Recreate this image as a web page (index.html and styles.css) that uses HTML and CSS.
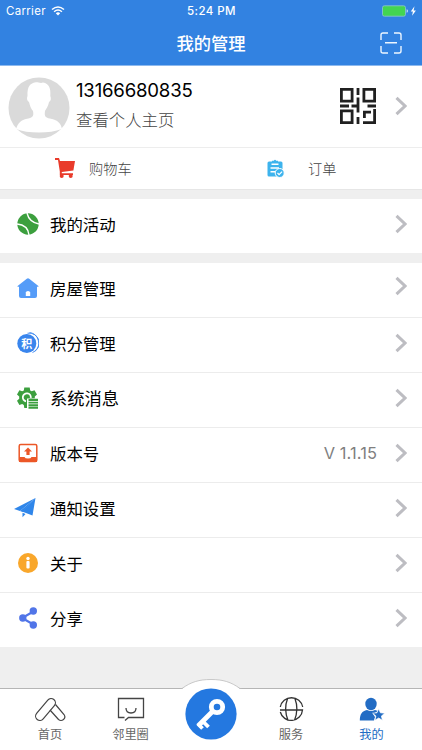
FILE: index.html
```html
<!DOCTYPE html>
<html lang="zh-CN">
<head>
<meta charset="utf-8">
<meta name="viewport" content="width=device-width, initial-scale=1">
<title>我的管理</title>
<link rel="stylesheet" href="styles.css">
</head>
<body>
<svg width="0" height="0" class="defs"><symbol id="chev" viewBox="0 0 12 20"><path d="M1.500 1.800 10 10 1.500 18.200" fill="none" stroke="#bdbdc2" stroke-width="3"/></symbol></svg>
<div class="app">
  <header class="top">
    <div class="status">
      <div class="carrier"><span>Carrier</span>
        <svg width="14" height="10" viewBox="0 0 14 10" fill="none" stroke="#fff" stroke-width="1.500"><path d="M1 3.500Q7-1.600 13 3.500M3.100 5.700Q7 2.300 10.900 5.700"/><path d="M4.800 7.200Q7 5.400 9.200 7.200L7 9.500Z" fill="#fff" stroke="none"/></svg>
      </div>
      <span class="time">5:24 PM</span>
      <svg class="battery" width="35" height="12" viewBox="0 0 35 12"><rect x=".5" y=".8" width="23" height="10.400" rx="1.800" fill="#43d551" stroke="#8fc4d8" stroke-width=".8"/><path d="M24.600 4.200q1.400.3 1.400 1.800t-1.400 1.800z" fill="#c5dcf6"/><path d="M32.500 1.200 28.800 6.500h2.100l-.8 4.200 3.800-5.300h-2.300z" fill="#fff"/></svg>
    </div>
    <div class="nav">
      <h1>我的管理</h1>
      <svg class="scan" width="22" height="22" viewBox="0 0 22 22" fill="none" stroke="#edf6ff" stroke-width="1.400"><path d="M1 8V3q0-2 2-2h5M14 1h5q2 0 2 2v5M21 14v5q0 2-2 2h-5M8 21H3q-2 0-2-2v-5M5 10.700h12"/></svg>
    </div>
  </header>

  <section class="profile">
    <svg class="avatar" width="62" height="62" viewBox="0 0 62 62"><circle cx="31" cy="31" r="30.500" fill="#dadada"/><path d="M19.500 19C19 8.500 23 7 25 6c4-2 7 1 10-.5 6 1 8 6 7.300 13.500 1 2 .7 5-1.300 6-1 5-3 7-4 9-1 6 1 7 7 8 5 1 9 4 10 10Q44 55.500 31 55.500 17 55.500 8 52c2-6 5-9 10-10 7-1 8-3 7-8-2-2-3-5-4-9-2-1-2.500-4-1.500-6z" fill="#fff"/></svg>
    <div class="who"><div class="phone">13166680835</div><div class="sub">查看个人主页</div></div>
    <svg class="qr" width="36" height="36" viewBox="0 0 36 36" fill="none" stroke="#202020" stroke-width="2.800"><path d="M1.400 1.400h10.700v11.700H1.400zM23.900 1.400h10.700v11.700H23.900zM1.400 22.900h10.700v11.700H1.400zM18 0v7M18 9.500v15M18 29v7M0 18h9M11.500 18H18M27.500 18H36M24.400 30V24.200h6.600M34.600 21v13.600H23"/></svg>
    <svg class="chev"><use href="#chev"/></svg>
  </section>
  <section class="quick">
    <div class="cart">
      <svg width="20" height="20" viewBox="0 0 20 20"><path d="M0 0h4l1 3h15l-1.600 9.500L6.800 14v1.200H18V17H4.800v-3.500L3 2H0z" fill="#e93b2b"/><circle cx="6.700" cy="18" r="2" fill="#e93b2b"/><circle cx="15.700" cy="18" r="2" fill="#e93b2b"/></svg>
      <span>购物车</span>
    </div>
    <div class="order">
      <svg width="18" height="19" viewBox="0 0 18 19"><path d="M2 2.500h3V1.700h1.800Q8 0 9.200 1.700H11v.8h3q1.500 0 1.500 1.500v6L9 17.500H2Q.5 17.500.5 16V4Q.5 2.500 2 2.500z" fill="#3db3ed"/><path d="M4.500 5.200h7M3.500 9h8.500M3.500 12.700h5" stroke="#fff" stroke-width="1.500"/><circle cx="12.700" cy="14" r="4.500" fill="#3db3ed" stroke="#fff"/><path d="m10.500 14 1.600 1.600 3-3" fill="none" stroke="#fff" stroke-width="1.200"/></svg>
      <span>订单</span>
    </div>
  </section>

  <main>
    <ul class="list single">
      <li><svg class="ico" viewBox="0 0 22 22"><circle cx="11" cy="11" r="10.700" fill="#3c9f3e"/><path d="M10 0Q12 9 22 11M0 11Q11 12 12 22" fill="none" stroke="#fff" stroke-width="1.400"/></svg><span>我的活动</span><svg class="chev"><use href="#chev"/></svg></li>
    </ul>
    <ul class="list">
      <li class="house"><svg class="ico" viewBox="0 0 22 22"><path d="M11 1.200q.6 0 1.200.5l9.200 7.200q.5.800-.4.900H20V19q0 2-2 2H4q-2 0-2-2V9.800H1q-.9-.1-.4-.9l9.200-7.200q.6-.5 1.200-.5z" fill="#559cf8"/><path d="M8.800 19v-3.500Q9 14 11 14t2.200 1.500V19z" fill="#fff"/></svg><span>房屋管理</span><svg class="chev"><use href="#chev"/></svg></li>
      <li><svg class="ico" viewBox="0 0 22 22"><circle cx="9.800" cy="11.500" r="9.500" fill="#3985ed"/><path d="M10.500 1.200A10 10 0 0 1 15.500 20.500M12.500.6a10.500 10.500 0 0 1 5.500 18.400" fill="none" stroke="#4a90ef" stroke-width="1"/><text x="4.200" y="15.800" class="coin">积</text></svg><span>积分管理</span><svg class="chev"><use href="#chev"/></svg></li>
      <li><svg class="ico" viewBox="0 0 22 22"><path d="M7.300.5h5.400l.5 3 1.500.8 2.800-1 2.500 4.200-2.200 2v2h3v9.500H7.300l-.5-3-1.600-1-2.800 1L0 13.700l2.200-2V9.500L0 7.500l2.400-4.200 2.800 1 1.600-.8z" fill="#3c9f3e"/><path d="M9 14.300a4 4 0 1 1 4.800-3.500" fill="none" stroke="#fff" stroke-width="1.800"/><path d="M10 11.500H22V22H10z" fill="#fff"/><path d="M11.500 13H21M11.500 15.600H21M11.500 18.200H21M11.500 20.800H21" stroke="#3c9f3e" stroke-width="1.900"/></svg><span class="wide">系统消息</span><svg class="chev"><use href="#chev"/></svg></li>
      <li><svg class="ico" viewBox="0 0 22 22"><rect x="2.200" y="2.600" width="17.600" height="17" rx="1.500" fill="#fff" stroke="#ec5727" stroke-width="1.500"/><path d="M2 15h5.500q.5 1.500 3.500 1.500t3.500-1.500H20v5H2zM11 5.500 15 9.500h-2.400v3.500H9.400V9.500H7z" fill="#ec5727"/></svg><span>版本号</span><em>V 1.1.15</em><svg class="chev"><use href="#chev"/></svg></li>
      <li><svg class="ico plane" viewBox="0 0 22 22"><path d="M21.500 1 0 12l6 2zM21.500 1 8 14.500l10.500 4zM8.500 15.800v4.500l3-3.200z" fill="#2f86ea"/><path d="M21.500 1 6 14l2.500 1" fill="#2f86ea"/></svg><span>通知设置</span><svg class="chev"><use href="#chev"/></svg></li>
      <li><svg class="ico" viewBox="0 0 22 22"><circle cx="11" cy="11" r="10" fill="#f9a72b"/><circle cx="11" cy="6.500" r="1.700" fill="#fff"/><rect x="9.400" y="9" width="3.200" height="7.500" rx="1" fill="#fff"/></svg><span>关于</span><svg class="chev"><use href="#chev"/></svg></li>
      <li><svg class="ico" viewBox="0 0 22 22" fill="#5175e8"><path d="M16.500 4.500 5 11l11.500 6.500" fill="none" stroke="#5175e8" stroke-width="2.200"/><circle cx="16.300" cy="4" r="3.700"/><circle cx="5.800" cy="11" r="3.700"/><circle cx="16.300" cy="18" r="3.700"/></svg><span>分享</span><svg class="chev"><use href="#chev"/></svg></li>
    </ul>
  </main>

  <footer class="tabs">
    <div class="tab"><svg width="32" height="25" viewBox="0 0 32 25" fill="none" stroke="#444" stroke-width="1.200"><rect x="-4.300" y="-13" width="8.600" height="26" rx="4.300" transform="translate(11.500 12.500) rotate(40)"/><path d="M21.500 7.500 30 17.500q2 3-.5 5t-5 0L16 13"/></svg><span>首页</span></div>
    <div class="tab"><svg width="28" height="25" viewBox="0 0 28 25" fill="none" stroke="#444" stroke-width="1.300"><path d="M7.500 20.500H1.500V1.500h25v19H11.500L8 23.500M9 11q0 5 5 5t5-5"/></svg><span>邻里圈</span></div>
    <div class="tab center"><svg class="key" width="64" height="70" viewBox="0 0 64 70"><path d="M3 10C11 3 19 .5 32 .5S53 3 61 10V12H3z" fill="#fff"/><path d="M1.500 9.500H3C12 3 20 .5 32 .5S52 3 61 9.500h1.500" fill="none" stroke="#bbb" stroke-width=".8"/><circle cx="32" cy="35" r="25.600" fill="#2478e0"/><circle cx="38" cy="28" r="5.700" fill="none" stroke="#fff" stroke-width="4.800"/><path d="m34 32-15 15" stroke="#fff" stroke-width="4.800"/><path d="m23.500 42 6 6M19 45l4.500 4.500" stroke="#fff" stroke-width="3.800"/></svg></div>
    <div class="tab"><svg width="25" height="25" viewBox="0 0 25 25" fill="none" stroke="#333" stroke-width="1.300"><path d="M23.700 10A11.400 11.400 0 0 0 1.300 10M1 13h22.500a11.300 11.300 0 0 1-22.200 2M8.500 1.700Q4.500 12 9 23.200M16 1.700Q20 12 15.500 23.200"/></svg><span>服务</span></div>
    <div class="tab active"><svg width="26" height="25" viewBox="0 0 26 25" fill="#226cc4"><ellipse cx="12" cy="7" rx="5.700" ry="6.200"/><path d="M.8 23.500C1 17 3 14 8 13q4 2 8 0l3 1-5 3 2 3-1 3.500z"/><path d="m19.700 11.800 1.700 4 4.400.4-3.400 2.800 1 4.300-3.700-2.300-3.800 2.300 1-4.300-3.300-2.800 4.300-.4z" stroke="#fff" stroke-width=".7"/></svg><span>我的</span></div>
  </footer>
</div>
</body>
</html>
```

FILE: styles.css
```css
* { box-sizing: border-box; }
body { margin: 0; font-family: Inter, "Noto Sans CJK SC", sans-serif; background: #efefef; }
svg { display: block; flex: none; }
.defs { position: absolute; }
.app { width: 422px; height: 750px; display: flex; flex-direction: column; overflow: hidden; }
.top { height: 66px; background: #3282e1; color: #fff; border-bottom: 1px solid #8db9ee; flex: none; }
.status { height: 22px; display: grid; grid-template-columns: 1fr auto 1fr; align-items: center; padding: 0 5px 0 6px; font-size: 11.500px; }
.carrier { display: flex; align-items: center; gap: 5px; letter-spacing: .3px; }
.time { font-weight: 500; letter-spacing: .45px; }
.battery { justify-self: end; }
.nav { height: 43px; display: grid; grid-template-columns: 1fr auto 1fr; align-items: center; padding: 0 20px; }
h1 { grid-column: 2; margin: 0; font-size: 17.300px; line-height: 24px; font-weight: 500; }
.scan { justify-self: end; margin-top: -2px; }
.profile { height: 82px; background: #fff; border-bottom: 1px solid #ededed; display: flex; align-items: center; padding: 2px 15px 0 8px; flex: none; }
.who { margin-left: 6px; flex: 1; }
.phone { font-size: 18.600px; line-height: 28px; letter-spacing: -.2px; margin-top: -6px; }
.sub { font-size: 16.400px; line-height: 26px; color: #444; margin-top: 3px; font-weight: 300; }
.qr { margin: -3px 19px 0 0; }
.chev { width: 12px; height: 20px; }
.profile .chev { margin-top: -3px; }
.quick { height: 42px; background: #fff; border-bottom: 1px solid #e6e6e6; display: grid; grid-template-columns: 1fr 1fr; font-size: 14.200px; color: #444; font-weight: 300; flex: none; }
.cart, .order { display: flex; align-items: center; padding: 0 0 1px 55px; gap: 14px; }
.order { padding-left: 56px; gap: 23px; }
.list { list-style: none; margin: 10px 0 0; padding: 0; background: #fff; }
.list li { height: 55px; display: flex; align-items: center; border-bottom: 1px solid #ececec; padding: 0 15px 4px 17px; font-size: 16.400px; color: #000; }
.single { margin-top: 9px; }
.list li:last-child { border: 0; height: 54px; }
.list li > span { margin-left: 11px; flex: 1; }
.list li > .wide { font-size: 17.300px; }
.house .chev { margin-top: -5px; }
.list .ico { width: 22px; height: 22px; }
.list .plane { margin: 0 3px 0 -3px; }
.list li > span { position: relative; top: -.5px; }
.coin { font: 700 11px "Noto Sans CJK SC", sans-serif; fill: #fff; }
em { font-style: normal; color: #808080; font-size: 16.400px; margin-right: 18px; font-weight: 400; letter-spacing: .1px; }
.tabs { height: 62px; margin-top: auto; background: #fff; border-top: 1px solid #b5b5b5; display: grid; grid-template-columns: 100px 61px 100px 60px 101px; flex: none; }
.tab { display: flex; flex-direction: column; align-items: center; padding-top: 8px; font-size: 12.200px; color: #666; }
.tab span { line-height: 18px; margin-top: 4px; }
.tab.center { padding: 0; }
.key { margin-top: -10px; }
.tab.active { color: #226cc4; }
```
